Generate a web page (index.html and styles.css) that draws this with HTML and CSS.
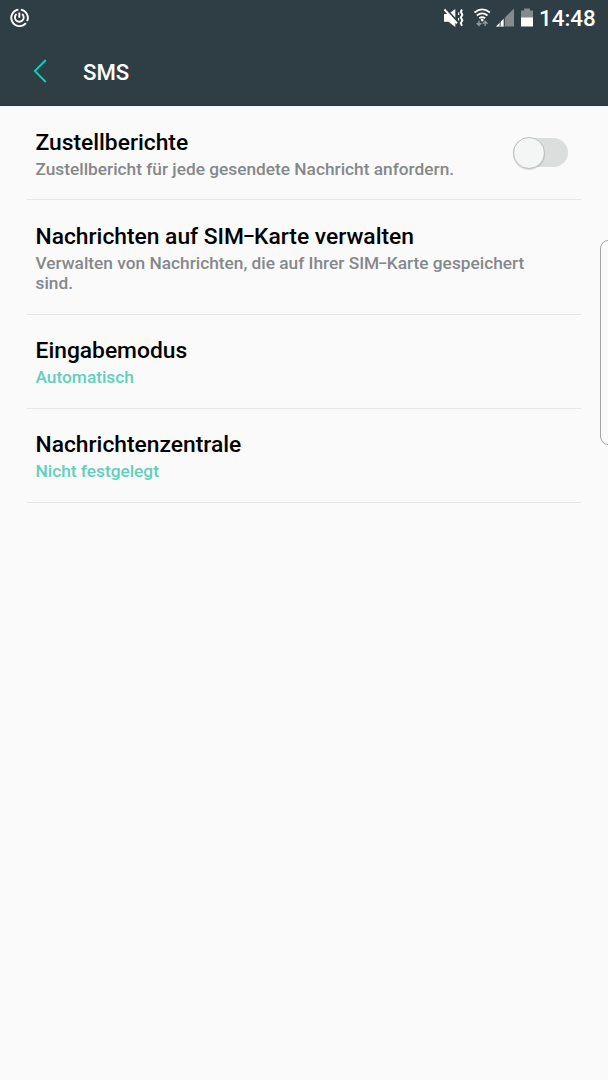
FILE: index.html
```html
<!DOCTYPE html>
<html lang="de">
<head>
<meta charset="utf-8">
<title>SMS</title>
<link rel="stylesheet" href="styles.css">
</head>
<body>
<header class="top">
  <div class="status">
    <svg class="status-app" width="20" height="20" viewBox="0 0 20 20" fill="none" stroke="#fff">
      <path d="M8.4 1.6A8.3 8.3 0 1 0 15.9 15.2M10.8 1.6A8.3 8.3 0 0 1 17.1 13.2" stroke-width="1.9"/>
      <path d="M6.5 6A4.4 4.4 0 1 0 12.1 6M9.3 4.6V9.8" stroke-width="1.9"/>
    </svg>
    <div class="status-icons">
      <svg width="20" height="20" viewBox="0 0 20 20">
        <path d="M0 6H4.4L11.3 1V19L4.4 13.7H0Z" fill="#fff"/>
        <path d="M1.6 .8L14.6 14.8" stroke="#2f3d45" stroke-width="2"/>
        <path d="M.4 1.4L13 15.4" stroke="#fff" stroke-width="2"/>
        <path d="M15.4 1.5L14.2 4L15.8 6.8L14.2 9.6L15.8 12.3L14.2 15L15.4 17.8" transform="translate(2.6 0)" fill="none" stroke="#fff" stroke-width="1.9"/>
        <path d="M14.6 4.5V7M14.6 10V12.5" stroke="#fff" stroke-width="1.2"/>
      </svg>
      <svg width="17" height="20" viewBox="0 0 17 20" fill="none">
        <path d="M.5 4.5Q8.2-1.7 15.9 4.5M2.9 7.5Q8.2 3.3 13.5 7.5M5.3 10.2Q8.2 8 11.1 10.2" stroke="#fff" stroke-width="1.8"/>
        <circle cx="8.2" cy="12" r="1.4" fill="#fff"/>
        <path d="M5 12.8V17.5M2.7 15L5 17.5L7.3 15M11.2 18V13.3M8.9 15.8L11.2 13.3L13.5 15.8" stroke="#8d969a" stroke-width="1.5"/>
      </svg>
      <svg width="18" height="20" viewBox="0 0 18 20">
        <path d="M18 .5V18.5H0Z" fill="#848b8e"/>
        <path d="M7.7 10.8V18.5H0Z" fill="#fff"/>
        <path d="M4.1 12V18.5M8.3 9V18.5" stroke="#2f3d45" stroke-width="1"/>
      </svg>
      <svg width="12" height="20" viewBox="0 0 12 20">
        <path d="M3 .5H9V2.5H12V10H0V2.5H3Z" fill="#848b8e"/>
        <path d="M0 9.5H12V18.5H0Z" fill="#fff"/>
      </svg>
    </div>
    <span class="clock">14:48</span>
  </div>
  <div class="bar">
    <svg class="back" width="16" height="26" viewBox="0 0 16 26" fill="none" stroke="#08d5bd" stroke-width="1.8"><path d="M12.8 2L1.8 13L12.8 24"/></svg>
    <h1 class="heading">SMS</h1>
  </div>
</header>
<main class="list">
  <section class="row">
    <div class="row-text">
      <h2 class="title">Zustellberichte</h2>
      <p class="desc">Zustellbericht für jede gesendete Nachricht anfordern.</p>
    </div>
    <div class="switch"><div class="knob"></div></div>
  </section>
  <section class="row row-tall">
    <div class="row-text">
      <h2 class="title">Nachrichten auf SIM<span class="dash">-</span>Karte verwalten</h2>
      <p class="desc">Verwalten von Nachrichten, die auf Ihrer SIM<span class="dash">-</span>Karte gespeichert<br>sind.</p>
    </div>
  </section>
  <section class="row">
    <div class="row-text">
      <h2 class="title">Eingabemodus</h2>
      <p class="desc value">Automatisch</p>
    </div>
  </section>
  <section class="row">
    <div class="row-text">
      <h2 class="title">Nachrichtenzentrale</h2>
      <p class="desc value">Nicht festgelegt</p>
    </div>
  </section>
</main>
<div class="edge-handle"></div>
</body>
</html>
```
FILE: styles.css
```css
* { box-sizing: border-box; }
body {
  margin: 0;
  height: 1080px;
  overflow: hidden;
  position: relative;
  background: #fafafa;
  font-family: Roboto, "Liberation Sans", sans-serif;
  font-weight: 500;
}
h1, h2, p { margin: 0; font-weight: 500; }
svg { display: block; flex: none; }
.top {
  height: 106px;
  background: #2f3d45;
  border-bottom: 1px solid #263238;
  color: #fff;
}
.status {
  display: flex;
  align-items: center;
  height: 36px;
  padding: 0 12px 0 10px;
}
.status-icons {
  display: flex;
  gap: 10px;
  margin-left: auto;
}
.status-icons svg:nth-child(3) { margin-left: -5px; }
.status-icons svg:nth-child(4) { margin-left: -3px; }
.clock {
  width: 57px;
  margin-left: 6px;
  font-size: 22.4px;
  line-height: 36px;
}
.bar {
  display: flex;
  align-items: center;
  height: 70px;
  padding-left: 33px;
}
.heading {
  margin-left: 34px;
  padding-top: 1px;
  font-size: 22.2px;
  line-height: 28px;
}
.list { padding: 0 27px; }
.row {
  display: flex;
  justify-content: space-between;
  height: 94px;
  padding: 23px 13px 0 8.5px;
  border-bottom: 1px solid #e5e6e6;
}
.row-tall { height: 115px; }
.row-tall ~ .row { padding-top: 22px; }
.row-tall + .row { height: 93.5px; }
.title {
  font-size: 22.8px;
  line-height: 28px;
  color: #000;
  white-space: nowrap;
}
.desc {
  margin-top: 2px;
  font-size: 17.3px;
  line-height: 20px;
  color: #85888a;
  white-space: nowrap;
}
.dash {
  display: inline-block;
  padding: 0 .05em;
  transform: translateY(-.04em) scale(1.55, .9);
}
.value { color: #60d0bd; }
.switch {
  width: 55px;
  height: 29px;
  margin-top: 9px;
  border-radius: 15px;
  background: #dcdddd;
}
.knob {
  width: 32px;
  height: 32px;
  margin-top: -1px;
  border: 1px solid #bcbfbf;
  border-radius: 50%;
  background: #f4f6f6;
  box-shadow: 0 1px 1px rgba(0, 0, 0, .12);
}
.edge-handle {
  position: absolute;
  top: 240px;
  right: -8px;
  width: 16px;
  height: 205px;
  border: 1px solid #a4a5a5;
  border-radius: 8px / 9px;
}
```
